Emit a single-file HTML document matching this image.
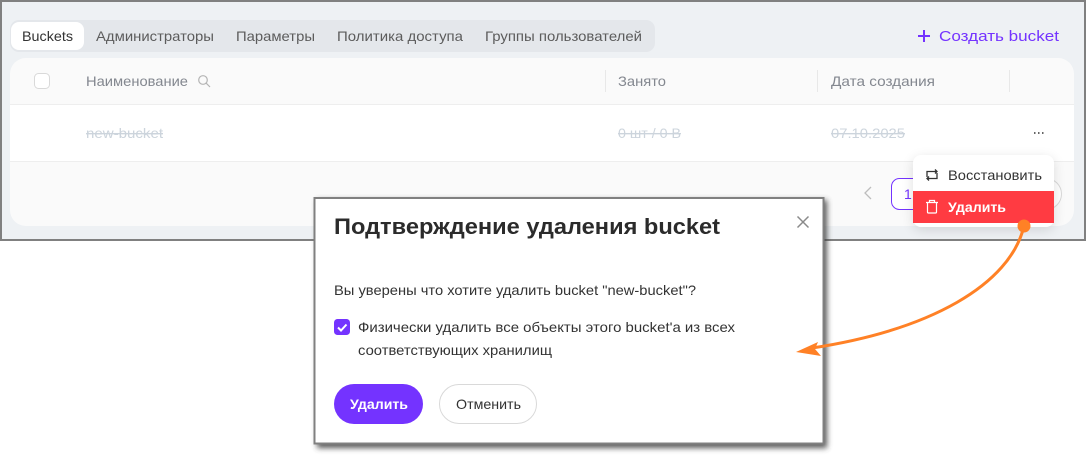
<!DOCTYPE html>
<html lang="ru"><head><meta charset="utf-8"><title>Buckets</title>
<style>
html,body{margin:0;padding:0;background:#fff;width:1086px;height:466px;overflow:hidden}
svg{display:block}
text{font-family:"Liberation Sans","Noto Sans CJK SC",sans-serif;font-size:14px}
</style></head><body>
<svg width="1086" height="466" viewBox="0 0 1086 466" xmlns="http://www.w3.org/2000/svg">
<defs>
<filter id="ds" x="-10%" y="-10%" width="125%" height="125%"><feGaussianBlur stdDeviation="3"/></filter>
<filter id="ms" x="-20%" y="-20%" width="140%" height="150%"><feGaussianBlur stdDeviation="6"/></filter>
</defs>
<rect width="1086" height="466" fill="#fff"/>
<rect x="1" y="1" width="1084" height="239" fill="#eef1f4" stroke="#808080" stroke-width="2"/>

<rect x="10" y="20" width="645" height="32" rx="9" fill="#e4e7eb"/>
<rect x="11" y="22" width="73" height="28" rx="8" fill="#fff"/>
<g fill="#5c5c5c">
<text x="22" y="41" fill="#333" textLength="51" lengthAdjust="spacingAndGlyphs">Buckets</text>
<text x="96" y="41" textLength="118" lengthAdjust="spacingAndGlyphs">Администраторы</text>
<text x="236" y="41" textLength="79" lengthAdjust="spacingAndGlyphs">Параметры</text>
<text x="337" y="41" textLength="126" lengthAdjust="spacingAndGlyphs">Политика доступа</text>
<text x="485" y="41" textLength="157" lengthAdjust="spacingAndGlyphs">Группы пользователей</text>
</g>
<path d="M918 36h12M924 30v12" stroke="#7433ff" stroke-width="2" fill="none"/>
<text x="939" y="41" fill="#7433ff" style="font-size:15px" textLength="120" lengthAdjust="spacingAndGlyphs">Создать bucket</text>

<rect x="10" y="58" width="1064" height="168" rx="16" fill="#fafafa"/>
<rect x="10" y="105" width="1064" height="56" fill="#fff"/>
<rect x="10" y="104" width="1064" height="1" fill="#eeeeee"/>
<rect x="10" y="161" width="1064" height="1" fill="#eeeeee"/>
<rect x="34.500" y="73.500" width="15" height="15" rx="4" fill="#fff" stroke="#d9d9d9"/>
<g fill="#83878f">
<text x="86" y="86" textLength="102" lengthAdjust="spacingAndGlyphs">Наименование</text>
<text x="618" y="86" textLength="48" lengthAdjust="spacingAndGlyphs">Занято</text>
<text x="831" y="86" textLength="104" lengthAdjust="spacingAndGlyphs">Дата создания</text>
</g>
<g stroke="#b4b4b4" stroke-width="1.200" fill="none"><circle cx="203" cy="80" r="4.300"/><path d="M206.200 83.200l3.800 3.800"/></g>
<path d="M605.500 70v22M817.500 70v22M1009.500 70v22" stroke="#e8e8e8"/>
<g fill="#ccd4dc">
<text x="86" y="138" textLength="77" lengthAdjust="spacingAndGlyphs" text-decoration="line-through">new-bucket</text>
<text x="618" y="138" textLength="63" lengthAdjust="spacingAndGlyphs" text-decoration="line-through">0 шт / 0 B</text>
<text x="831" y="138" textLength="74" lengthAdjust="spacingAndGlyphs" text-decoration="line-through">07.10.2025</text>
</g>
<path d="M1034 133h1.500M1038 133h1.500M1042 133h1.500" stroke="#333" stroke-width="1.500" fill="none"/>

<path d="M871 187l-6 6 6 6" stroke="#bdbdbd" stroke-width="1.300" fill="none"/>
<rect x="891.500" y="178.500" width="40" height="31" rx="8" fill="#fff" stroke="#7433ff"/>
<text x="904" y="199" fill="#7433ff">1</text>
<circle cx="1046" cy="194" r="15.500" fill="#fff" stroke="#d9d9d9"/>

<rect x="913" y="158" width="141" height="72" rx="8" fill="#000" opacity=".12" filter="url(#ms)"/>
<rect x="913" y="155" width="141" height="72" rx="8" fill="#fff"/>
<rect x="913" y="191" width="141" height="32" fill="#ff3b42"/>
<g stroke="#333" stroke-width="1.300" fill="none">
<path d="M927 177v-5.500h10M935 169.500l2 2-2 2"/>
<path d="M937 173v5.500h-10M929 176.500l-2 2 2 2"/>
</g>
<text x="948" y="180" fill="#333" textLength="94" lengthAdjust="spacingAndGlyphs">Восстановить</text>
<g stroke="#fff" stroke-width="1.200" fill="none">
<path d="M926 202.500h12M929.500 202.500v-2h5v2M927.500 202.500v9.500a1 1 0 0 0 1 1h7a1 1 0 0 0 1-1v-9.500"/>
</g>
<text x="948" y="212" fill="#fff" font-weight="bold" textLength="58" lengthAdjust="spacingAndGlyphs">Удалить</text>

<rect x="317" y="200" width="510" height="248" fill="#3c3c3c" opacity=".85" filter="url(#ds)"/>
<rect x="314.500" y="198" width="509" height="245.500" fill="#fff" stroke="#808080" stroke-width="2"/>
<text x="334" y="234" fill="#2b2b2b" font-weight="bold" style="font-size:22px" textLength="386" lengthAdjust="spacingAndGlyphs">Подтверждение удаления bucket</text>
<path d="M797.500 216.500l11 11M808.500 216.500l-11 11" stroke="#8a8a8a" stroke-width="1.500" fill="none"/>
<text x="334" y="295" fill="#333" textLength="362" lengthAdjust="spacingAndGlyphs">Вы уверены что хотите удалить bucket "new-bucket"?</text>
<rect x="334" y="319" width="16" height="16" rx="3.500" fill="#7433ff"/>
<path d="M338 327.500l3 3 5.500-6" stroke="#fff" stroke-width="2" fill="none"/>
<text x="358" y="332" fill="#333" textLength="377" lengthAdjust="spacingAndGlyphs">Физически удалить все объекты этого bucket'а из всех</text>
<text x="358" y="355" fill="#333" textLength="194" lengthAdjust="spacingAndGlyphs">соответствующих хранилищ</text>
<rect x="334" y="384" width="89" height="40" rx="20" fill="#7433ff"/>
<text x="350" y="409" fill="#fff" font-weight="bold" textLength="58" lengthAdjust="spacingAndGlyphs">Удалить</text>
<rect x="439.500" y="384.500" width="97" height="39" rx="19.500" fill="#fff" stroke="#d9d9d9"/>
<text x="456" y="409" fill="#333" textLength="65" lengthAdjust="spacingAndGlyphs">Отменить</text>

<path d="M1024 226C1010 285 930 330 812 348" stroke="#ff8126" stroke-width="3" fill="none"/>
<circle cx="1024" cy="226" r="6.500" fill="#ff8126"/>
<path d="M796 352L818 342 815 349 821 356Z" fill="#ff8126"/>
</svg>
</body></html>
